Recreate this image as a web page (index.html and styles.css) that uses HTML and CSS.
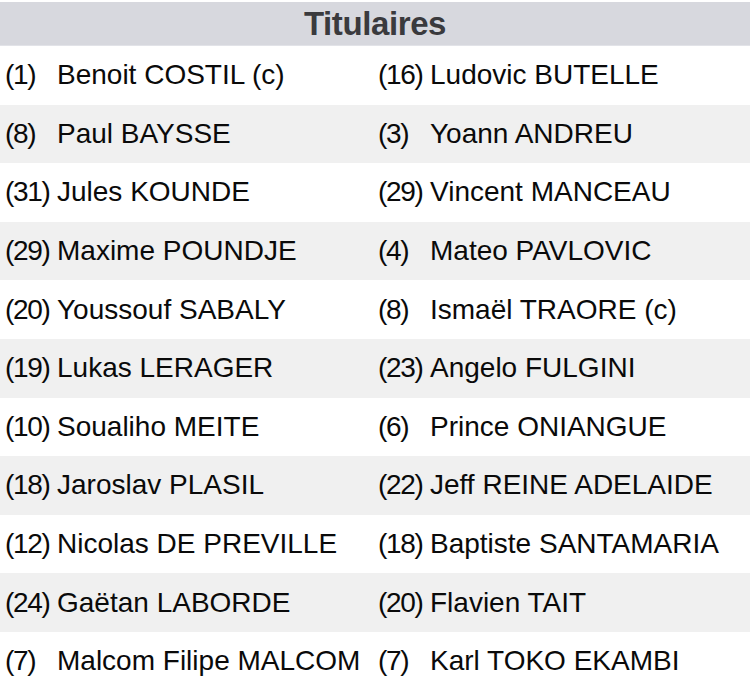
FILE: index.html
```html
<!DOCTYPE html>
<html lang="fr">
<head>
<meta charset="utf-8">
<title>Titulaires</title>
<link rel="stylesheet" href="styles.css">
</head>
<body>
<div class="lineup">
  <div class="lineup-header">Titulaires</div>
  <div class="row">
    <div class="player"><span class="num">(1)</span><span class="name">Benoit COSTIL (c)</span></div>
    <div class="player"><span class="num">(16)</span><span class="name">Ludovic BUTELLE</span></div>
  </div>
  <div class="row alt">
    <div class="player"><span class="num">(8)</span><span class="name">Paul BAYSSE</span></div>
    <div class="player"><span class="num">(3)</span><span class="name">Yoann ANDREU</span></div>
  </div>
  <div class="row">
    <div class="player"><span class="num">(31)</span><span class="name">Jules KOUNDE</span></div>
    <div class="player"><span class="num">(29)</span><span class="name">Vincent MANCEAU</span></div>
  </div>
  <div class="row alt">
    <div class="player"><span class="num">(29)</span><span class="name">Maxime POUNDJE</span></div>
    <div class="player"><span class="num">(4)</span><span class="name">Mateo PAVLOVIC</span></div>
  </div>
  <div class="row">
    <div class="player"><span class="num">(20)</span><span class="name">Youssouf SABALY</span></div>
    <div class="player"><span class="num">(8)</span><span class="name">Ismaël TRAORE (c)</span></div>
  </div>
  <div class="row alt">
    <div class="player"><span class="num">(19)</span><span class="name">Lukas LERAGER</span></div>
    <div class="player"><span class="num">(23)</span><span class="name">Angelo FULGINI</span></div>
  </div>
  <div class="row">
    <div class="player"><span class="num">(10)</span><span class="name">Soualiho MEITE</span></div>
    <div class="player"><span class="num">(6)</span><span class="name">Prince ONIANGUE</span></div>
  </div>
  <div class="row alt">
    <div class="player"><span class="num">(18)</span><span class="name">Jaroslav PLASIL</span></div>
    <div class="player"><span class="num">(22)</span><span class="name">Jeff REINE ADELAIDE</span></div>
  </div>
  <div class="row">
    <div class="player"><span class="num">(12)</span><span class="name">Nicolas DE PREVILLE</span></div>
    <div class="player"><span class="num">(18)</span><span class="name">Baptiste SANTAMARIA</span></div>
  </div>
  <div class="row alt">
    <div class="player"><span class="num">(24)</span><span class="name">Gaëtan LABORDE</span></div>
    <div class="player"><span class="num">(20)</span><span class="name">Flavien TAIT</span></div>
  </div>
  <div class="row">
    <div class="player"><span class="num">(7)</span><span class="name">Malcom Filipe MALCOM</span></div>
    <div class="player"><span class="num">(7)</span><span class="name">Karl TOKO EKAMBI</span></div>
  </div>
</div>
</body>
</html>
```

FILE: styles.css
```css
html, body {
  margin: 0;
  padding: 0;
  background: #ffffff;
}

body {
  font-family: "Liberation Sans", Arial, sans-serif;
  color: #0a0a0a;
  overflow: hidden;
}

.lineup {
  width: 750px;
  padding-top: 2px;
}

.lineup-header {
  height: 43px;
  background: #d7d8de;
  border-bottom: 1px solid #e2e3e8;
  display: flex;
  align-items: center;
  justify-content: center;
  font-weight: bold;
  font-size: 33px;
  color: #3a3a3d;
  letter-spacing: -0.4px;
}

.row {
  height: 58.6px;
  display: grid;
  grid-template-columns: 373px 1fr;
  padding-left: 5px;
  align-items: center;
  background: #ffffff;
}

.row.alt {
  background: #f0f0f0;
}

.player {
  display: flex;
  align-items: center;
  font-size: 28px;
  white-space: nowrap;
}

.num {
  width: 52px;
  flex: none;
  letter-spacing: -1.3px;
}

.name {
  letter-spacing: 0;
}
```
